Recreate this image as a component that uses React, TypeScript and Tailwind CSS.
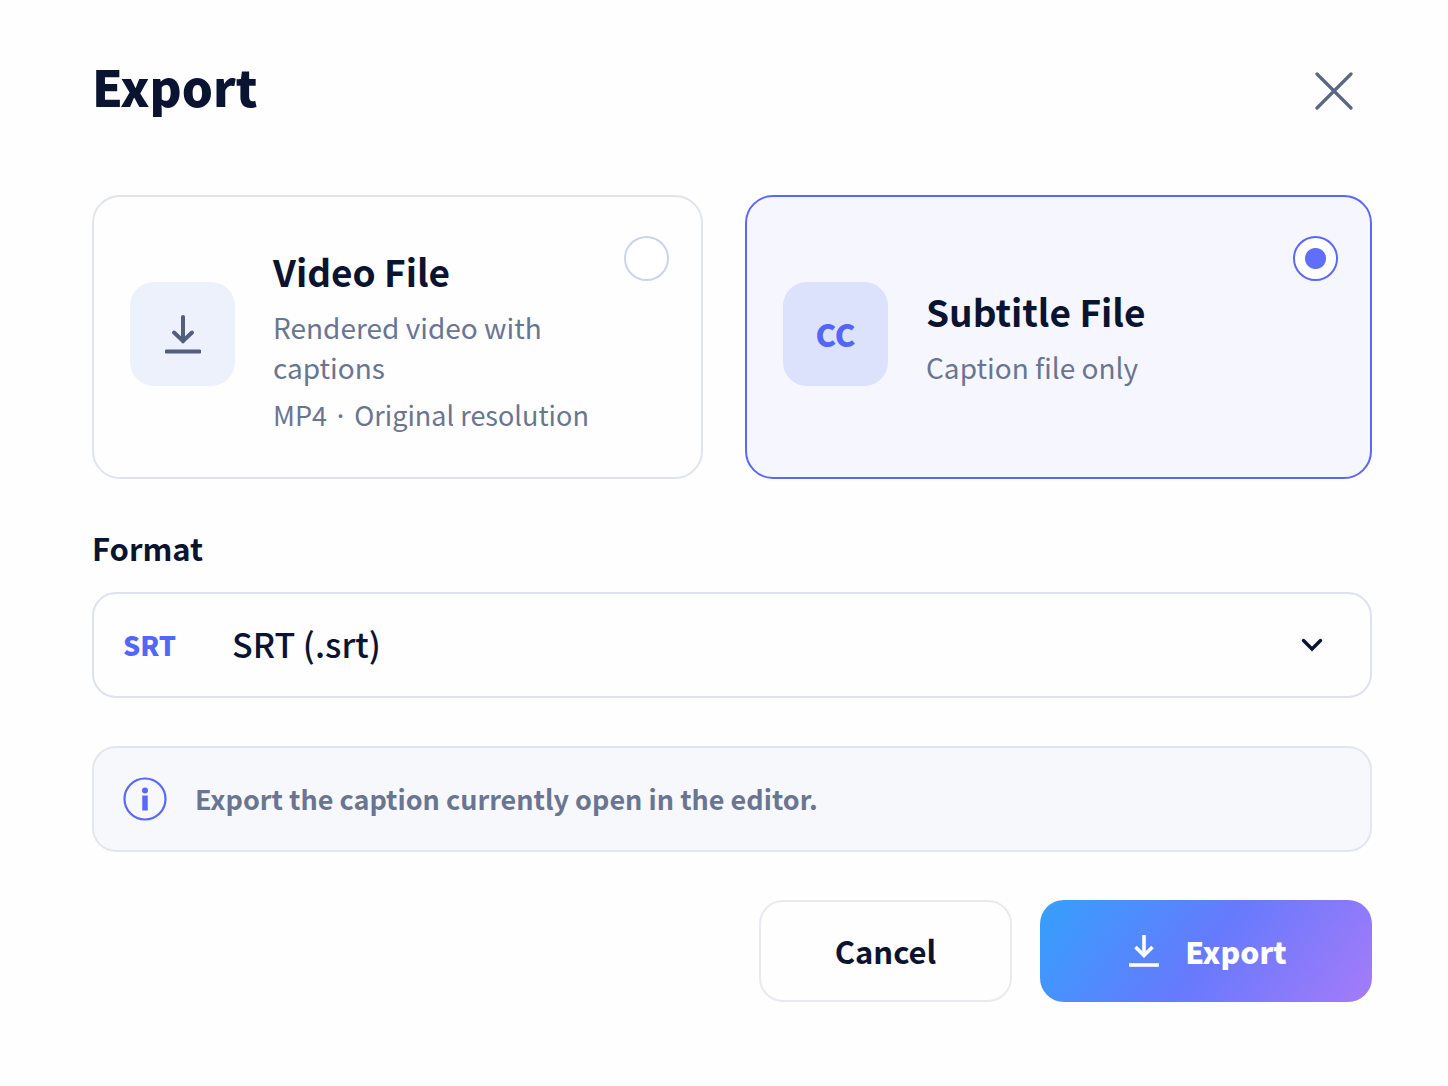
import { useState } from "react";
import type { ReactNode } from "react";

type ExportKind = "video" | "subtitle";

type IconProps = { className?: string };

function DownloadIcon({ className }: IconProps) {
  return (
    <svg className={className} viewBox="0 0 36 40" fill="none" stroke="currentColor" strokeWidth="4" aria-hidden="true">
      <path d="M18 3v24" strokeLinecap="round" />
      <path d="M9 18.500L18 27l9-8.500" strokeLinecap="round" />
      <path d="M1.500 37.500h33" strokeWidth="4" strokeLinecap="round" />
    </svg>
  );
}

function ButtonDownloadIcon({ className }: IconProps) {
  return (
    <svg className={className} viewBox="0 0 30 34" fill="none" stroke="currentColor" strokeWidth="3.6" aria-hidden="true">
      <path d="M15 1v21" />
      <path d="M6.500 13L15 21.500l8.500-8.500" />
      <path d="M0 31h30" />
    </svg>
  );
}

type OptionCardProps = {
  value: ExportKind;
  selected: boolean;
  onSelect: (value: ExportKind) => void;
  title: string;
  icon: ReactNode;
  contentClassName: string;
  children: ReactNode;
};

function OptionCard({ value, selected, onSelect, title, icon, contentClassName, children }: OptionCardProps) {
  return (
    <label
      className={`relative flex min-h-[284px] cursor-pointer items-center gap-[38px] rounded-[28px] border-2 py-8 pl-9 pr-8 ${
        selected ? "border-[#5a67fb] bg-[#f6f7fe]" : "border-[#e2e4ed] bg-[#fefefe]"
      }`}
    >
      <span
        className={`mb-1.5 flex h-[104px] w-[105px] shrink-0 items-center justify-center rounded-[24px] ${
          selected ? "bg-[#dce1fc] text-[#5266f8]" : "bg-[#edf1fc] text-[#535d7c]"
        }`}
      >
        {icon}
      </span>
      <span className={`flex flex-1 flex-col ${contentClassName}`}>
        <span className="text-[37px] font-bold leading-[56px] text-[#0a1431]">{title}</span>
        {children}
      </span>
      <input
        type="radio"
        name="export-kind"
        value={value}
        checked={selected}
        onChange={() => onSelect(value)}
        className="absolute right-8 top-[39px] size-[45px] cursor-pointer appearance-none rounded-full border-2 border-[#ccd4ec] bg-white checked:border-[#5a67fb] checked:bg-[radial-gradient(circle,#5f6ff9_10px,#ffffff_11px)]"
      />
    </label>
  );
}

export default function App() {
  const [kind, setKind] = useState<ExportKind>("subtitle");

  return (
    <main
      role="dialog"
      aria-labelledby="export-title"
      className="min-h-screen bg-[#fefefe] pb-20 pl-[92px] pr-[76px] pt-[52px] font-['Noto_Sans_CJK_KR','Noto_Sans',sans-serif] text-[#0a1431]"
    >
      <header className="flex items-center justify-between pr-[19px]">
        <h1 id="export-title" className="mb-2.5 text-[49px] font-black leading-[68px]">
          Export
        </h1>
        <button type="button" aria-label="Close" className="cursor-pointer text-[#5b6683]">
          <svg className="size-[38px]" viewBox="0 0 38 38" fill="none" stroke="currentColor" strokeWidth="3.2" strokeLinecap="round">
            <path d="M2 2l34 34M36 2L2 36" />
          </svg>
        </button>
      </header>

      <div role="radiogroup" aria-label="Export type" className="mt-[65px] grid grid-cols-[611fr_627fr] gap-[42px]">
        <OptionCard
          value="video"
          selected={kind === "video"}
          onSelect={setKind}
          title="Video File"
          icon={<DownloadIcon className="h-10 w-9" />}
          contentClassName="pt-1"
        >
          <span className="mt-2 max-w-[320px] text-[28px] leading-10 text-[#6a7591]">Rendered video with captions</span>
          <span className="mt-2 text-[27px] leading-10 text-[#6a7591]">MP4 · Original resolution</span>
        </OptionCard>
        <OptionCard
          value="subtitle"
          selected={kind === "subtitle"}
          onSelect={setKind}
          title="Subtitle File"
          icon={<span className="text-[31px] font-black leading-10">CC</span>}
          contentClassName="pb-1"
        >
          <span className="mt-2 text-[28px] leading-10 text-[#6a7591]">Caption file only</span>
        </OptionCard>
      </div>

      <label htmlFor="format" className="mt-12 block text-[31px] font-bold leading-[42px]">
        Format
      </label>
      <div className="relative mt-[23px]">
        <span className="pointer-events-none absolute inset-y-0 left-[31px] flex items-center text-[27px] font-black text-[#5266f8]">
          SRT
        </span>
        <select
          id="format"
          className="h-[106px] w-full cursor-pointer appearance-none rounded-[24px] border-2 border-[#dfe2ee] bg-[#fefefe] pb-1 pl-[138px] pr-20 text-[34px] font-medium"
        >
          <option>SRT (.srt)</option>
        </select>
        <svg
          className="pointer-events-none absolute inset-y-0 right-[49px] my-auto h-3.5 w-[22px]"
          viewBox="0 0 22 14"
          fill="none"
          stroke="currentColor"
          strokeWidth="3.4"
          strokeLinecap="round"
          aria-hidden="true"
        >
          <path d="M2.500 2.500l8.500 8.500 8.500-8.500" />
        </svg>
      </div>

      <p className="mt-12 flex min-h-[106px] items-center gap-7 rounded-[24px] border-2 border-[#e4e6ee] bg-[#f7f8fc] px-[29px] text-[27px] font-bold leading-10 text-[#6a7591]">
        <svg className="size-11 shrink-0 text-[#5a67fb]" viewBox="0 0 44 44" fill="none" aria-hidden="true">
          <circle cx="22" cy="22" r="20.500" stroke="currentColor" strokeWidth="2.200" />
          <circle cx="22" cy="13.500" r="3" fill="currentColor" />
          <path d="M22 18.500v15" stroke="currentColor" strokeWidth="5.500" />
        </svg>
        Export the caption currently open in the editor.
      </p>

      <footer className="mt-12 flex justify-end gap-7">
        <button
          type="button"
          className="h-[102px] w-[253px] cursor-pointer rounded-[24px] border-2 border-[#e9eaf0] bg-[#fefefe] text-[31px] font-bold"
        >
          Cancel
        </button>
        <button
          type="button"
          className="flex h-[102px] w-[332px] cursor-pointer items-center justify-center gap-[26px] rounded-[24px] bg-[linear-gradient(125deg,#35a0fd_0%,#667afd_50%,#a57bf8_100%)] pl-1 text-[30px] font-black text-white"
        >
          <ButtonDownloadIcon className="h-[34px] w-[30px]" />
          Export
        </button>
      </footer>
    </main>
  );
}
